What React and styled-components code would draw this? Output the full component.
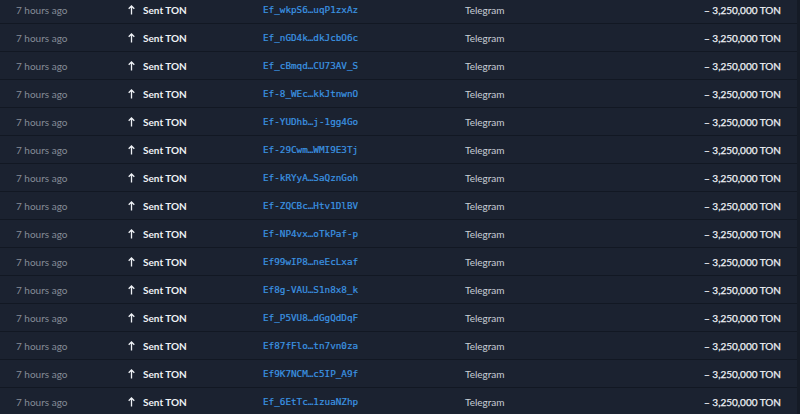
import React from "react";
import styled, { createGlobalStyle } from "styled-components";

const Global = createGlobalStyle`
  html, body { margin: 0; padding: 0; background: #1b2230; overflow: hidden; }
  body { font-family: Lato, "Noto Sans", sans-serif; }
`;

const Table = styled.div`
  margin-top: -4px;
  width: 797px;
  border-right: 3px solid #151b26;
  display: flex;
  flex-direction: column;
`;

const Row = styled.div`
  display: grid;
  grid-template-columns: 112px 135px 202px 1fr auto;
  align-items: center;
  height: 27px;
  padding: 0 16px 0 16px;
  border-bottom: 1px solid #121823;
  font-size: 10px;
`;

const Time = styled.span`
  color: #858c97;
`;

const Kind = styled.span`
  display: flex;
  align-items: center;
  gap: 8px;
  color: #eef1f5;
  font-weight: 700;
`;

const Addr = styled.span`
  font-family: "DejaVu Sans Mono", "Liberation Mono", monospace;
  font-size: 9.3px;
  color: #3b95e3;
  -webkit-text-stroke: 0.2px #3b95e3;
`;

const Source = styled.span`
  color: #c9ced6;
`;

const Amount = styled.span`
  color: #eef1f5;
  -webkit-text-stroke: 0.25px #eef1f5;
`;

const Arrow = () => (
  <svg width="7" height="10" viewBox="0 0 7 10" fill="none" stroke="#eef1f5" strokeWidth="1.3">
    <path d="M3.5 9.5V1M0.7 3.8L3.5 1L6.3 3.8" />
  </svg>
);

const addrs = [
  "Ef_wkpS6…uqP1zxAz",
  "Ef_nGD4k…dkJcbO6c",
  "Ef_cBmqd…CU73AV_S",
  "Ef-8_WEc…kkJtnwnO",
  "Ef-YUDhb…j-1gg4Go",
  "Ef-29Cwm…WMI9E3Tj",
  "Ef-kRYyA…SaQznGoh",
  "Ef-ZQCBc…Htv1DlBV",
  "Ef-NP4vx…oTkPaf-p",
  "Ef99wIP8…neEcLxaf",
  "Ef8g-VAU…S1n8x8_k",
  "Ef_P5VU8…dGgQdDqF",
  "Ef87fFlo…tn7vn0za",
  "Ef9K7NCM…c5IP_A9f",
  "Ef_6EtTc…1zuaNZhp",
];

export default function App() {
  return (
    <>
      <Global />
      <Table>
        {addrs.map((a) => (
          <Row key={a}>
            <Time>7 hours ago</Time>
            <Kind>
              <Arrow />
              Sent TON
            </Kind>
            <Addr>{a}</Addr>
            <Source>Telegram</Source>
            <Amount>– 3,250,000 TON</Amount>
          </Row>
        ))}
      </Table>
    </>
  );
}
